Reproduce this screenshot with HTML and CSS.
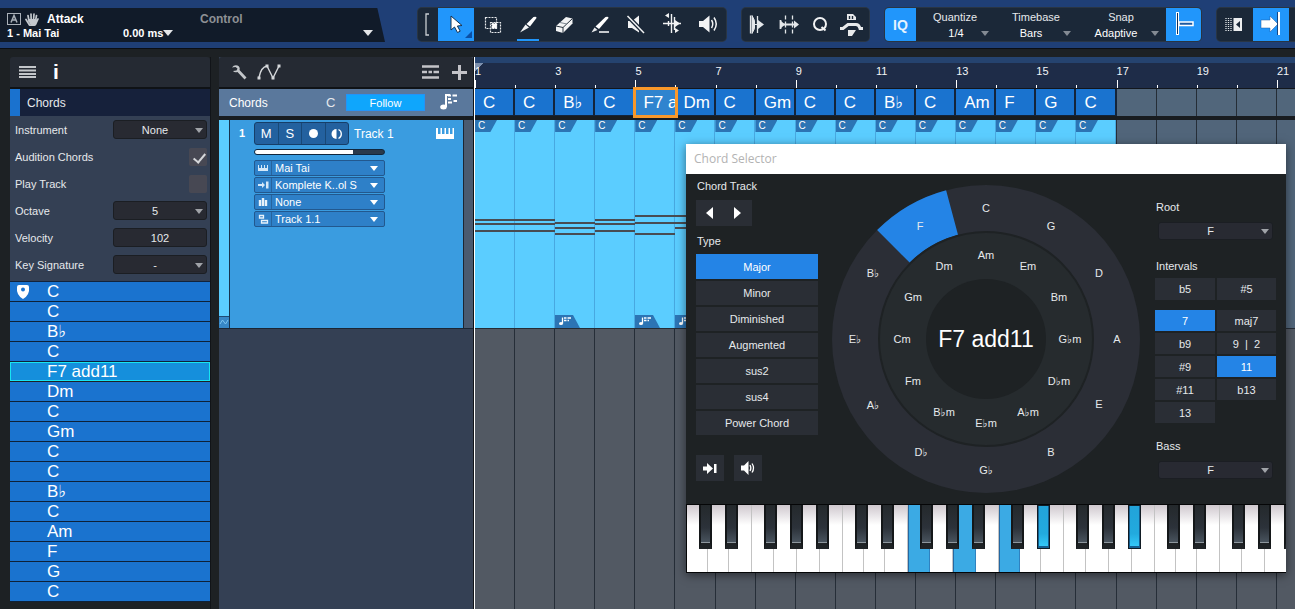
FILE: index.html
```html
<!DOCTYPE html>
<html lang="en">
<head>
  <meta charset="UTF-8">
  <meta name="viewport" content="width=device-width, initial-scale=1.0">
  <title>Chord Selector</title>
  <link rel="stylesheet" href="styles.css">
</head>
<body>
  <header class="toolbar">
    <div class="param-box">
      <div class="param-line">
        <svg class="icon-a" width="14" height="12" viewBox="0 0 14 12"><rect x=".5" y=".5" width="13" height="11" fill="none" stroke="#a9b0b8"/><path d="M4 9.500L7 2.500 10 9.500M5 7h4" fill="none" stroke="#a9b0b8" stroke-width="1.500"/></svg>
        <svg class="icon-hand" width="14" height="13" viewBox="0 0 14 13"><path d="M1 6.500l3.500 5.500q3 1.500 6-.5L13 6M4 8L3 2.500M6.200 7L6 1M8.500 7L9 1M10.500 8l1-5.500" fill="none" stroke="#c3c8cd" stroke-width="1.700" stroke-linecap="round"/><path d="M3.500 6h8l-.5 5-3 1.500-3.500-1z" fill="#c3c8cd"/></svg>
        <b class="param-name">Attack</b>
        <b class="param-control">Control</b>
      </div>
      <div class="param-line small">
        <b class="param-track">1 - Mai Tai</b>
        <b class="param-value">0.00 ms</b>
        <i class="tri"></i>
        <i class="tri last"></i>
      </div>
    </div>

    <div class="tools">
      <svg class="bracket" width="20" height="33" viewBox="0 0 20 33"><path d="M11 6H8v21h3" fill="none" stroke="#c9ced3" stroke-width="1.300"/></svg>
      <button class="tool active" aria-label="Arrow"><svg width="36" height="33" viewBox="0 0 36 33"><path d="M13 8v14l3.500-3 3 5.500 2.700-1.300-2.800-5.200 4.600-.5z" fill="#fff" stroke="#16324f"/><path d="M34 23v7h-7z" fill="#0b4fa5"/></svg></button>
      <button class="tool" aria-label="Range"><svg width="36" height="33" viewBox="0 0 36 33"><path d="M11.500 9.500h11v11h-11zM16.500 14.500h10v10h-10z" fill="none" stroke="#e8eaec" stroke-width="1.200" stroke-dasharray="2 1"/><path d="M18 15.500l4.500 4.500m0-4.500L18 20" stroke="#fff" stroke-width="2.600"/></svg></button>
      <button class="tool marked" aria-label="Split"><svg width="36" height="33" viewBox="0 0 36 33"><path d="M23.500 9q3-1 3 1l-6.500 8.500-3.500-2.500z" fill="#fff"/><path d="M15.500 16.500l3.500 3-9 5z" fill="#f2f3f4"/></svg></button>
      <button class="tool" aria-label="Eraser"><svg width="36" height="33" viewBox="0 0 36 33"><path d="M20 9l6.500 1.500v5L17 25l-7-2v-5z" fill="#f2f3f4"/><path d="M10 18l7 1.500 9.500-9M17 19.500V25" fill="none" stroke="#26313c"/><path d="M14 14.500l7 1.500" stroke="#7e8891"/></svg></button>
      <button class="tool" aria-label="Paint"><svg width="36" height="33" viewBox="0 0 36 33"><path d="M23.500 9q3-1 3 1l-9.500 11-3.500-2.500z" fill="#fff"/><path d="M12.500 19.500l3 2.500-6 2.500z" fill="#e8eaec"/><path d="M17 24h10" stroke="#fff" stroke-width="1.500"/></svg></button>
      <button class="tool" aria-label="Mute"><svg width="36" height="33" viewBox="0 0 36 33"><path d="M10 13h4l7-5.500v17L14 20h-4z" fill="#f2f3f4"/><path d="M9.500 8L26 25" stroke="#1b2838" stroke-width="4"/><path d="M9.500 8L26 25" stroke="#f2f3f4" stroke-width="1.500"/></svg></button>
      <button class="tool" aria-label="Bend"><svg width="36" height="33" viewBox="0 0 36 33"><path d="M9 15.500h18M14.500 13v5M17.500 6v19M20.500 9v13" stroke="#f2f3f4" stroke-width="1.400"/><path d="M15 5v5l-4-2.500zM21 12v7l5-3.500zM21 20v5l4-2.500z" fill="#f2f3f4"/></svg></button>
      <button class="tool" aria-label="Listen"><svg width="36" height="33" viewBox="0 0 36 33"><path d="M9 13h4l6.500-5.500v17L13 19H9z" fill="#f2f3f4"/><path d="M21.500 12q2.500 4 0 8M24 9.500q4.500 6.500 0 13" fill="none" stroke="#f2f3f4" stroke-width="1.500"/></svg></button>
    </div>

    <div class="tools second">
      <button class="tool narrow" aria-label="Bars"><svg width="31" height="33" viewBox="0 0 31 33"><path d="M8.500 7.500v18" stroke="#e4e7ea" stroke-width="1.300"/><path d="M10 7.500v18l2.500-5V12.500zM12 16.500h9" stroke="#e4e7ea" fill="#e4e7ea"/><path d="M16 12l6 4.500-6 4.500z" fill="#e4e7ea"/><path d="M15.500 8v17" stroke="#e4e7ea" stroke-width="1.300"/></svg></button>
      <button class="tool narrow" aria-label="Stretch"><svg width="31" height="33" viewBox="0 0 31 33"><path d="M7 16.500h16M7.500 12v9" stroke="#e4e7ea" stroke-width="1.800"/><path d="M12.500 7.500v4m0 2v6m0 2v4M19.500 7.500v4m0 2v6m0 2v4" stroke="#e4e7ea" stroke-width="1.300"/><path d="M21 12.500l5 4-5 4zM7.500 12.500l4.500 4-4.500 4z" fill="#e4e7ea"/></svg></button>
      <button class="tool narrow" aria-label="Quantize"><svg width="31" height="33" viewBox="0 0 31 33"><circle cx="16" cy="16" r="6" fill="none" stroke="#f2f3f4" stroke-width="2"/><path d="M17.500 19l4 3.500" stroke="#f2f3f4" stroke-width="2"/></svg></button>
      <button class="tool narrow" aria-label="Audio bend"><svg width="31" height="33" viewBox="0 0 31 33"><path d="M12 12V6h6l3 3v3zM13 22h8l-4 6h-4z" fill="#e8eaec"/><path d="M14.500 8v3M17.500 8v3" stroke="#1b2838" stroke-width="1.400"/><path d="M5 20.500h3l5-4h8q3 0 4 4h3" fill="none" stroke="#e8eaec" stroke-width="3"/></svg></button>
    </div>

    <div class="tools third">
      <button class="iq">IQ</button>
      <div class="field quantize"><label for="quantize">Quantize</label><span class="pick"><select id="quantize"><option>1/4</option></select></span></div>
      <div class="field"><label for="timebase">Timebase</label><span class="pick"><select id="timebase"><option>Bars</option></select></span></div>
      <div class="field snap"><label for="snap">Snap</label><span class="pick"><select id="snap"><option>Adaptive</option></select></span></div>
      <button class="tool active end" aria-label="Snap"><svg width="35" height="33" viewBox="0 0 35 33"><rect x="10.500" y="4.500" width="2" height="22" fill="#102f58" stroke="#fff"/><path d="M13 14h14v3.500H13z" fill="#1c59a1" stroke="#fff" stroke-width="1.500"/></svg></button>
    </div>

    <div class="tools fourth">
      <button class="tool" aria-label="Autoscroll area"><svg width="36" height="33" viewBox="0 0 36 33"><path d="M9 10v13M11.500 10v13M14 10v13" stroke="#e4e7ea" stroke-width="1.300" stroke-dasharray="1 1"/><rect x="16.500" y="10" width="8.500" height="13" fill="#eceef0"/><path d="M23 13v7l-4-3.500z" fill="#1b2838"/></svg></button>
      <button class="tool active" aria-label="Autoscroll"><svg width="36" height="33" viewBox="0 0 36 33"><path d="M8 12h9V8l8 8-8 8v-4H8z" fill="#fff" stroke="#1c59a1" stroke-width=".5"/><path d="M26 4v23" stroke="#fff" stroke-width="2"/><path d="M24.500 4v23" stroke="#17457f"/></svg></button>
    </div>
  </header>

  <main class="workspace">
    <aside class="inspector">
      <div class="panel-head">
        <svg width="18" height="12" viewBox="0 0 18 12"><path d="M0 1h17M0 4.500h17M0 8h17M0 11h17" stroke="#c3c6ca" stroke-width="1.800"/></svg>
        <b class="info">i</b>
      </div>
      <h2 class="inspector-title">Chords</h2>
      <div class="params">
        <div class="row"><label for="instrument">Instrument</label><span class="pick box"><select id="instrument"><option>None</option></select></span></div>
        <div class="row"><label for="audition">Audition Chords</label><input class="check" id="audition" type="checkbox" checked></div>
        <div class="row"><label for="play">Play Track</label><input class="check" id="play" type="checkbox"></div>
        <div class="row"><label for="octave">Octave</label><span class="pick box"><select id="octave"><option>5</option></select></span></div>
        <div class="row"><label for="velocity">Velocity</label><input class="number" id="velocity" type="text" value="102"></div>
        <div class="row"><label for="key">Key Signature</label><span class="pick box"><select id="key"><option>-</option></select></span></div>
      </div>
      <ul class="chord-list" id="chord-list"></ul>
    </aside>

    <section class="track-column">
      <div class="panel-head">
        <svg width="17" height="16" viewBox="0 0 17 16"><path d="M1 3.500Q3 .5 6.500 1.500q3 1.500 2 4.500l7 7.500-2 2-7-7.500q-3 1-4.500-1l3.500-.5 1-2-2-1.500z" fill="#c3c6ca"/></svg>
        <svg class="curve" width="24" height="16" viewBox="0 0 24 16"><path d="M2 13.500Q4 3 10 2l6 12L22 2" fill="none" stroke="#d5d8db" stroke-width="1.400"/><path d="M.5 12.500h3v3h-3zM8.500.5h3v3h-3zM14.500 12.500h3v3h-3zM20.500.5h3v3h-3z" fill="#d5d8db"/></svg>
        <svg class="push" width="17" height="14" viewBox="0 0 17 14"><path d="M0 1.500h17M0 7h5M6.500 7H10M11.500 7H17M0 12.500h17" stroke="#c3c3c8" stroke-width="2.500"/></svg>
        <svg class="plus" width="15" height="15" viewBox="0 0 15 15"><path d="M0 7.500h15M7.500 0v15" stroke="#c3c3c8" stroke-width="3"/></svg>
      </div>
      <div class="chord-head">
        <span class="chord-title">Chords</span>
        <span class="chord-key">C</span>
        <button class="follow">Follow</button>
        <svg width="18" height="17" viewBox="0 0 18 17"><ellipse cx="3.500" cy="13" rx="3.300" ry="2.500" fill="#fff"/><path d="M6 13V1h4" fill="none" stroke="#fff" stroke-width="2"/><path d="M8 1.500h3M12.500 1.500H17M8 5h3M8 8.500h4M13.500 7H17" stroke="#fff" stroke-width="2"/></svg>
      </div>
      <div class="track">
        <div class="track-color"><svg width="10" height="12" viewBox="0 0 10 12"><path d="M1 8l2.500-4 3 4L9 4" fill="none" stroke="#7cc4ef"/></svg></div>
        <b class="track-no">1</b>
        <div class="track-body">
          <div class="track-top">
            <div class="msr">
              <button>M</button><button>S</button>
              <button aria-label="Record"><i class="dot"></i></button>
              <button aria-label="Monitor"><svg width="12" height="12" viewBox="0 0 12 12"><path d="M5.500 1a5 5 0 0 0 0 10z" fill="#fff"/><path d="M7.500 1.500a5 5 0 0 1 0 9" fill="none" stroke="#fff" stroke-width="1.300"/></svg></button>
            </div>
            <span class="track-name">Track 1</span>
            <svg class="keys" width="18" height="11" viewBox="0 0 18 11"><path d="M0 0h2v6h2.500V0h1.500v6h2.500V0H10v6h2.500V0H14v6h2.500V0H18v11H0z" fill="#fff"/></svg>
          </div>
          <input class="volume" type="range" min="0" max="100" value="76" aria-label="Volume">
          <div class="slot"><svg width="16" height="14" viewBox="0 0 16 14"><path d="M3 4h1v3h2V4h1v3h2V4h1v3h2V4h1v6H3z" fill="#d5e8f8"/></svg><span class="pick"><select aria-label="Instrument"><option>Mai Tai</option></select></span></div>
          <div class="slot"><svg width="16" height="14" viewBox="0 0 16 14"><path d="M3 6h4V4l3 3-3 3V8H3z" fill="#d5e8f8"/><path d="M11 3.500h2.500v7H11z" fill="#d5e8f8"/></svg><span class="pick"><select aria-label="Input"><option>Komplete K..ol S</option></select></span></div>
          <div class="slot"><svg width="16" height="14" viewBox="0 0 16 14"><path d="M5 5v6M8 3v8M11 5v6" stroke="#e8f2fa" stroke-width="2.400"/></svg><span class="pick"><select aria-label="Effects"><option>None</option></select></span></div>
          <div class="slot"><svg width="16" height="14" viewBox="0 0 16 14"><path d="M4.500 3.500h4v2.500h-4zM6.500 8.500h6V11h-6z" fill="none" stroke="#e8f2fa" stroke-width="1.300"/></svg><span class="pick"><select aria-label="Layer"><option>Track 1.1</option></select></span></div>
        </div>
        <div class="track-edge"></div>
      </div>
    </section>

    <section class="timeline">
      <div class="ruler" id="ruler"></div>
      <div class="chord-lane" id="chord-lane"></div>
      <div class="arranger">
        <div class="bars" id="bars"></div>
        <div class="clips" id="clips"></div>
      </div>
    </section>
  </main>

  <section class="dialog">
    <h1 class="dialog-title">Chord Selector</h1>
    <div class="dialog-body">
      <div class="types">
        <h3>Chord Track</h3>
        <div class="nav">
          <button aria-label="Previous chord"><svg width="8" height="12" viewBox="0 0 8 12"><path d="M7 0v12L0 6z" fill="#fff"/></svg></button>
          <button aria-label="Next chord"><svg width="8" height="12" viewBox="0 0 8 12"><path d="M0 0v12l7-6z" fill="#fff"/></svg></button>
        </div>
        <h3>Type</h3>
        <div class="type-list">
          <button class="on">Major</button>
          <button>Minor</button>
          <button>Diminished</button>
          <button>Augmented</button>
          <button>sus2</button>
          <button>sus4</button>
          <button>Power Chord</button>
        </div>
        <div class="actions">
          <button aria-label="Step input"><svg width="14" height="11" viewBox="0 0 14 11"><path d="M0 3.500h4V0l6 5.500L4 11V7.500H0zM11 1h2.500v9H11z" fill="#fff"/></svg></button>
          <button aria-label="Audition"><svg width="16" height="14" viewBox="0 0 16 14"><path d="M1 4.500h3L8.500 0v14L4 9.500H1z" fill="#fff"/><path d="M10 4q1.700 3 0 6M12 2.500q3 4.500 0 9" fill="none" stroke="#fff" stroke-width="1.300"/></svg></button>
        </div>
      </div>

      <svg class="wheel" width="310" height="310" viewBox="-155 -155 310 310">
        <circle r="154" fill="#2b2e36"/>
        <path d="M-108.900-108.900A154 154 0 0 1-39.900-148.800L-28-104.300A108 108 0 0 0-76.400-76.400Z" fill="#2484e6"/>
        <circle r="107" fill="#262b2e" stroke="#1e2224" stroke-width="2"/>
        <circle r="60" fill="#1e2224"/>
        <g id="wheel-labels"></g>
        <text class="wheel-chord" y="8">F7 add11</text>
      </svg>

      <div class="options">
        <label class="head" for="root">Root</label>
        <span class="pick box"><select id="root"><option>F</option></select></span>
        <h3>Intervals</h3>
        <div class="intervals fifths"><button>b5</button><button>#5</button></div>
        <div class="intervals">
          <button class="on">7</button><button>maj7</button>
          <button>b9</button><button>9 &nbsp;|&nbsp; 2</button>
          <button>#9</button><button class="on">11</button>
          <button>#11</button><button>b13</button>
          <button>13</button>
        </div>
        <label class="head bass" for="bass">Bass</label>
        <span class="pick box"><select id="bass"><option>F</option></select></span>
      </div>
    </div>
    <div class="piano">
      <div class="whites" id="whites"></div>
      <div class="blacks" id="blacks"></div>
    </div>
  </section>

  <script src="script.js"></script>
</body>
</html>
```

FILE: styles.css
```css
* {
  box-sizing: border-box;
}
body {
  margin: 0;
  height: 100vh;
  display: flex;
  flex-direction: column;
  position: relative;
  overflow: hidden;
  background: #1d2124;
  color: #e6e9ec;
  font: 11px "Liberation Sans", "DejaVu Sans", sans-serif;
}
button, select, input {
  margin: 0;
  padding: 0;
  border: 0;
  background: none;
  color: inherit;
  font: inherit;
}
h1, h2, h3, ul {
  margin: 0;
  padding: 0;
  font-weight: normal;
  list-style: none;
}
svg {
  display: block;
  flex: none;
}
select {
  appearance: none;
  width: 100%;
  height: 100%;
  text-align-last: center;
}
.pick {
  position: relative;
  display: block;
}
.pick::after {
  content: "";
  position: absolute;
  right: 3px;
  top: 50%;
  margin-top: -2px;
  border: 4px solid transparent;
  border-top: 5px solid #a0a3a8;
  border-bottom: 0;
  pointer-events: none;
}
.pick.box {
  width: 94px;
  height: 19px;
  background: #282a32;
  border: 1px solid #1b1e23;
  border-radius: 3px;
}
.pick.box select {
  padding-right: 10px;
}

/* toolbar */
.toolbar {
  display: flex;
  flex: none;
  align-items: flex-start;
  height: 49px;
  padding-top: 8px;
  background: #1f3f76;
  border-bottom: 1px solid #0b0e13;
}
.param-box {
  width: 385px;
  height: 34px;
  margin-right: 33px;
  padding: 4px 12px 0 7px;
  background: #111b29;
  clip-path: polygon(0 0, 98% 0, 100% 100%, 0 100%);
}
.param-line {
  display: flex;
  align-items: center;
  height: 14px;
  font-size: 12px;
  color: #fff;
}
.param-line.small {
  font-size: 11px;
}
.icon-hand {
  margin: 0 8px 0 4px;
}
.param-name {
  width: 153px;
}
.param-control {
  color: #8d9094;
}
.param-track {
  width: 116px;
}
.tri {
  border: 5px solid transparent;
  border-top: 6px solid #e4e6e8;
  border-bottom: 0;
}
.tri.last {
  margin-left: auto;
}
.tools {
  display: flex;
  height: 33px;
  background: #1b2838;
  border-radius: 4px;
  margin-right: 16px;
  overflow: hidden;
  box-shadow: 0 0 0 1px #293543;
}
.tool {
  width: 36px;
  height: 33px;
}
.tool.narrow {
  width: 31px;
}
.tool.active, .iq {
  background: #2196fb;
}
.tool.marked {
  background: linear-gradient(#2196fb, #2196fb) center bottom / 22px 2px no-repeat;
}
.second {
  padding-right: 3px;
}
.iq {
  width: 31px;
  font-size: 14px;
  font-weight: bold;
  color: #e6f3ff;
}
.field {
  width: 82px;
  padding-top: 3px;
  text-align: center;
}
.field.quantize {
  width: 80px;
}
.field.snap {
  width: 88px;
}
.field label {
  display: block;
  height: 14px;
  margin-right: 2px;
  line-height: 13px;
}
.field .pick {
  height: 16px;
}
.field select {
  color: #fff;
  padding-right: 12px;
}
.field.quantize select {
  padding-right: 0;
}
.field .pick::after {
  right: 7px;
  border-top-color: #838a93;
}
.tool.end {
  width: 35px;
}
.fourth {
  flex: 1;
  margin-right: 0;
  border-radius: 4px 0 0 4px;
}

/* workspace */
.workspace {
  display: flex;
  flex: 1;
  min-height: 0;
  padding: 8px 0 0 10px;
}
.panel-head {
  display: flex;
  align-items: center;
  height: 32px;
  padding: 0 9px;
  background: #252a33;
  border-bottom: 2px solid #0f1216;
  border-radius: 3px 3px 0 0;
}
.inspector {
  width: 201px;
  margin-right: 8px;
  border-right: 1px solid #111418;
}
.info {
  margin-left: 16px;
  font-size: 21px;
  line-height: 28px;
  color: #fff;
}
.inspector-title {
  height: 27px;
  padding-left: 7px;
  border-left: 10px solid #1a72cf;
  background: #16213b;
  font-size: 12px;
  line-height: 28px;
}
.params {
  padding: 0 3px 3px 5px;
  background: #344054;
  border-bottom: 1px solid #12233b;
}
.row {
  display: flex;
  align-items: center;
  justify-content: space-between;
  height: 27px;
}
.number {
  width: 94px;
  height: 19px;
  background: #282a32;
  border: 1px solid #1b1e23;
  border-radius: 3px;
  text-align: center;
}
.check {
  appearance: none;
  width: 18px;
  height: 18px;
  background: #474853;
  border-radius: 2px;
}
.check:checked::after {
  content: "";
  display: block;
  width: 5px;
  height: 10px;
  margin: 3px 0 0 7px;
  border: solid #d5d7da;
  border-width: 0 2px 2px 0;
  transform: rotate(40deg);
}
.chord-list li {
  position: relative;
  height: 20px;
  padding-left: 37px;
  background: #1a73cf;
  border-bottom: 1px solid #0e2138;
  color: #fff;
  font-size: 17px;
  line-height: 19px;
}
.chord-list li.current {
  height: 19px;
  margin-bottom: 1px;
  padding-left: 36px;
  background: #158fdc;
  border: 1px solid #18e4f2;
  line-height: 18px;
}
.chord-list svg {
  position: absolute;
  left: 6px;
  top: 2px;
}

/* track column */
.track-column {
  display: flex;
  flex-direction: column;
  width: 255px;
  background: #344054;
  border-right: 1px solid #111418;
}
.track-column .panel-head {
  padding: 0 6px 0 12px;
}
.curve {
  margin-left: 9px;
}
.push {
  margin-left: auto;
}
.plus {
  margin-left: 13px;
}
.chord-head {
  display: flex;
  align-items: center;
  height: 27px;
  padding: 0 15px 0 10px;
  background: #5a789c;
}
.chord-title {
  width: 97px;
  font-size: 12px;
  color: #fff;
}
.chord-key {
  width: 20px;
  font-size: 13px;
}
.follow {
  width: 79px;
  height: 17px;
  margin-right: auto;
  background: #0fa6fc;
  border: 1px solid #2493f7;
  color: #fff;
}
.track {
  display: flex;
  height: 213px;
  border-top: 4px solid #181c20;
  border-bottom: 1px solid #1b2634;
  background: #3a9ce0;
  color: #fff;
}
.track-color {
  display: flex;
  align-items: flex-end;
  width: 11px;
  background: linear-gradient(#5bcdff 196px, #1f4a74 196px, #1f4a74 197px, #3787c6 197px);
  border-right: 1px solid #17344e;
}
.track-no {
  width: 24px;
  padding: 7px 0 0 9px;
}
.track-body {
  flex: 1;
  padding-top: 2px;
}
.track-top {
  display: flex;
  align-items: center;
  padding-right: 9px;
}
.msr {
  display: flex;
  width: 95px;
  height: 23px;
  background: #23619f;
  border: 1px solid #163e68;
  border-radius: 3px;
}
.msr button {
  display: flex;
  align-items: center;
  justify-content: center;
  flex: 1;
  font-size: 13px;
}
.msr button + button {
  border-left: 1px solid #184978;
}
.dot {
  width: 9px;
  height: 9px;
  border-radius: 50%;
  background: #fff;
}
.track-name {
  margin-left: 5px;
  font-size: 12px;
}
.keys {
  margin-left: auto;
}
.volume {
  appearance: none;
  display: block;
  width: 131px;
  height: 6px;
  margin: 4px 0 5px;
  background: linear-gradient(90deg, #fff 76%, #2a3a4b 76%);
  border: 1px solid #10263c;
  border-radius: 3px;
}
.volume::-webkit-slider-thumb {
  appearance: none;
  width: 1px;
  height: 1px;
}
.slot {
  display: flex;
  width: 131px;
  height: 16px;
  margin-bottom: 1px;
  background: #2e80c8;
  border: 1px solid #22588e;
  border-radius: 2px;
}
.slot .pick {
  flex: 1;
  border-left: 1px solid #26649e;
}
.slot select {
  padding-left: 3px;
  text-align-last: left;
}
.slot .pick::after {
  right: 6px;
  border-top-color: #fff;
}
.track-edge {
  width: 10px;
  background: #4a5a70;
  border-left: 1px solid #1b2634;
}

/* timeline */
.timeline {
  display: flex;
  flex-direction: column;
  flex: 1;
  min-width: 0;
  overflow: hidden;
  border-left: 1px solid #fff;
}
.ruler, .chord-lane, .bars {
  display: grid;
  grid-template-columns: repeat(21, 1fr);
  width: 842px;
}
.ruler {
  height: 31px;
  flex: none;
  background: linear-gradient(#25436f 6px, #1e2c48 6px);
}
.ruler span {
  position: relative;
  padding-top: 8px;
  color: #f2f4f6;
}
.ruler span::after {
  content: "";
  position: absolute;
  left: 0;
  bottom: 0;
  width: 1px;
  height: 3px;
  background: #fff;
}
.ruler span.major::after {
  height: 8px;
}
.ruler span:first-child {
  background: linear-gradient(135deg, #7d90ad 6px, transparent 6px) 0 6px no-repeat;
}
.chord-lane {
  flex: none;
  height: 28px;
  border-top: 1px solid #12161c;
  background: #51667b;
}
.chord-lane span {
  border-right: 1px solid #252d36;
}
.chord-lane .chord {
  padding-left: 8px;
  overflow: hidden;
  white-space: nowrap;
  background: #1a73cf;
  border-right: 2px solid #14243a;
  border-bottom: 1px solid #14243a;
  color: #fff;
  font-size: 17px;
  line-height: 27px;
}
.chord-lane .selected {
  z-index: 1;
  margin: -2px -3px -2px -2px;
  padding-left: 7px;
  background: #2f84cf;
  border: 3px solid #f9982a;
  line-height: 25px;
}
.arranger {
  position: relative;
  flex: 1;
  border-top: 4px solid #181c20;
  background: linear-gradient(#51657a 208px, #252c35 208px, #252c35 209px, #525963 209px);
}
.bars {
  height: 100%;
}
.bars span {
  border-right: 1px solid #262e38;
}
.clips {
  position: absolute;
  left: 0;
  top: 0;
  display: grid;
  grid-template-columns: repeat(16, 1fr);
  width: 641px;
  height: 208px;
  background: #5bcdff;
}
.clip {
  position: relative;
  border-right: 1px solid #48a8e0;
}
.clip b {
  display: block;
  width: 22px;
  height: 12px;
  padding-left: 3px;
  background: #2c74b4;
  clip-path: polygon(0 0, 100% 0, 70% 100%, 0 100%);
  color: #fff;
  font-size: 10px;
  font-weight: normal;
  line-height: 12px;
}
.note {
  position: absolute;
  left: 0;
  right: -1px;
  height: 2px;
  background: #484c52;
}
.clip svg {
  position: absolute;
  left: 0;
  bottom: 0;
}

/* chord selector window */
.dialog {
  position: absolute;
  top: 144px;
  right: 9px;
  width: 600px;
  background: #1e2224;
  box-shadow: 0 2px 9px rgba(0, 0, 0, 0.5);
}
.dialog-title {
  height: 30px;
  padding-left: 8px;
  background: #fff;
  color: #b3b3b3;
  font: 12px/30px "Open Sans", "Noto Sans", sans-serif;
}
.dialog-body {
  display: flex;
  justify-content: space-between;
  height: 330px;
  padding: 0 10px;
}
.dialog h3, .head {
  display: block;
  font-size: 11px;
  line-height: 14px;
  padding-left: 1px;
}
.types {
  width: 122px;
  padding-top: 5px;
}
.nav {
  display: flex;
  width: 56px;
  height: 26px;
  margin: 7px 0 8px;
  background: #2a2e35;
}
.nav button {
  display: flex;
  flex: 1;
  align-items: center;
  justify-content: center;
}
.type-list {
  display: grid;
  gap: 2px;
  margin-top: 6px;
}
.type-list button, .intervals button {
  height: 24px;
  background: #2a2e35;
}
.type-list .on, .intervals .on {
  background: #2484e6;
  color: #fff;
}
.type-list .on {
  height: 25px;
}
.actions {
  display: flex;
  gap: 10px;
  margin-top: 20px;
}
.actions button {
  display: flex;
  align-items: center;
  justify-content: center;
  width: 28px;
  height: 26px;
  background: #2a2e35;
}
.wheel {
  margin: 10px 2px 0 0;
}
.wheel text {
  fill: #e6e9ec;
  text-anchor: middle;
}
.wheel .wheel-chord {
  fill: #fff;
  font-size: 23px;
}
.options {
  width: 121px;
  padding-top: 26px;
}
.options .box {
  width: 115px;
  height: 18px;
  margin: 8px 0 19px 3px;
}
.intervals {
  display: grid;
  grid-template-columns: 60px 59px;
  gap: 2px;
}
.intervals button {
  height: 21px;
}
.fifths {
  margin: 5px 0 10px;
}
.fifths button {
  height: 22px;
}
.bass {
  margin-top: 16px;
}
.piano {
  position: relative;
  height: 69px;
  overflow: hidden;
  border: solid #050607;
  border-width: 1px 0 1px 1px;
}
.whites, .blacks {
  display: flex;
}
.white {
  flex: none;
  width: 23px;
  height: 67px;
  border-right: 1px solid #c3c3c3;
  background: linear-gradient(#cfc8ce, #fff 20px);
}
.white.w21 {
  width: 21px;
}
.white.w22 {
  width: 22px;
}
.white.down {
  background: #3baae4;
  border-right-color: #2f82c0;
  box-shadow: inset 1px 0 #2468a2;
}
.blacks {
  position: absolute;
  left: 0;
  top: 0;
  padding-left: 12px;
}
.blacks span {
  flex: none;
  width: 13px;
  height: 44px;
}
.blacks .black {
  border: solid #141719;
  border-width: 0 2px 6px;
  border-bottom-color: #1f2326;
  background: linear-gradient(#24292c, #2c323a 60%, #4a5560);
  box-shadow: inset 0 -1px #8e979e;
}
.blacks .black.down {
  border: solid #135f91;
  border-width: 0 2px 3px;
  outline: 1px solid #111c24;
  outline-offset: -1px;
  background: linear-gradient(#22a3d9, #22aade 70%, #33c8f8);
  box-shadow: none;
}
```

FILE: script.js
```js
const progression = ['C', 'C', 'B♭', 'C', 'F7 add11', 'Dm', 'C', 'Gm', 'C', 'C', 'B♭', 'C', 'Am', 'F', 'G', 'C'];
const selected = 4;

// note rows per clip, measured from the top of the track
const notes = {
  'C': [99, 103, 110],
  'B♭': [102, 107, 113],
  'F7 add11': [95, 102, 113],
  'Dm': [95, 102, 107]
};

const pin = '<svg width="14" height="16" viewBox="0 0 14 16"><path d="M1 3q0-2 2-2h8q2 0 2 2 1 8-6 12Q0 11 1 3z" fill="#fff"/><circle cx="7" cy="5.500" r="2" fill="#1a73cf"/></svg>';
const badge = '<svg width="25" height="13" viewBox="0 0 25 13"><path d="M0 0h18l7 13H0z" fill="#2c74b4"/><ellipse cx="6" cy="8.500" rx="2" ry="1.500" fill="#fff"/><path d="M7.500 8.500V2.500M9 3h2.500M12.500 3H16M9 5.500h2.500M12.500 5.500h1.500" stroke="#fff" stroke-width="1.300"/></svg>';

document.getElementById('chord-list').innerHTML = progression.map((name, i) =>
  `<li class="${i === selected ? 'current' : ''}">${i === 0 ? pin : ''}${name}</li>`).join('');

let ruler = '';
let lane = '';
let bars = '';
for (let bar = 1; bar <= 21; bar++) {
  ruler += `<span class="${bar % 4 === 1 ? 'major' : ''}">${bar % 2 ? bar : ''}</span>`;
  const name = progression[bar - 1];
  lane += name ? `<span class="chord ${bar - 1 === selected ? 'selected' : ''}">${name}</span>` : '<span></span>';
  bars += '<span></span>';
}
document.getElementById('ruler').innerHTML = ruler;
document.getElementById('chord-lane').innerHTML = lane;
document.getElementById('bars').innerHTML = bars;

document.getElementById('clips').innerHTML = progression.map((name, i) => {
  const lines = (notes[name] || notes['C']).map(y => `<i class="note" style="top:${y}px"></i>`).join('');
  return `<div class="clip"><b>C</b>${lines}${[2, 4, 5].includes(i) ? badge : ''}</div>`;
}).join('');

// circle of fifths
function ring(names, radius) {
  return names.map((name, i) => {
    const angle = i * Math.PI / 6;
    const x = Math.round(Math.sin(angle) * radius);
    const y = Math.round(-Math.cos(angle) * radius) + 4;
    return `<text x="${x}" y="${y}">${name}</text>`;
  }).join('');
}
document.getElementById('wheel-labels').innerHTML =
  ring(['C', 'G', 'D', 'A', 'E', 'B', 'G♭', 'D♭', 'A♭', 'E♭', 'B♭', 'F'], 131) +
  ring(['Am', 'Em', 'Bm', 'G♭m', 'D♭m', 'A♭m', 'E♭m', 'B♭m', 'Fm', 'Cm', 'Gm', 'Dm'], 84);

// piano, four octaves from C
const whiteWidths = ['w21', 'w21', '', 'w22', '', '', ''];
const whitesDown = [10, 12, 14];
const blackSteps = [1, 3, 6, 8, 10];
const blacksDown = [27, 34];
let whites = '';
let blacks = '';
for (let i = 0; i < 28; i++) {
  whites += `<span class="white ${whiteWidths[i % 7]} ${whitesDown.includes(i) ? 'down' : ''}"></span>`;
}
for (let i = 1; i < 48; i++) {
  const black = blackSteps.includes(i % 12) ? 'black' : '';
  blacks += `<span class="${black} ${blacksDown.includes(i) ? 'down' : ''}"></span>`;
}
document.getElementById('whites').innerHTML = whites;
document.getElementById('blacks').innerHTML = blacks;
```
